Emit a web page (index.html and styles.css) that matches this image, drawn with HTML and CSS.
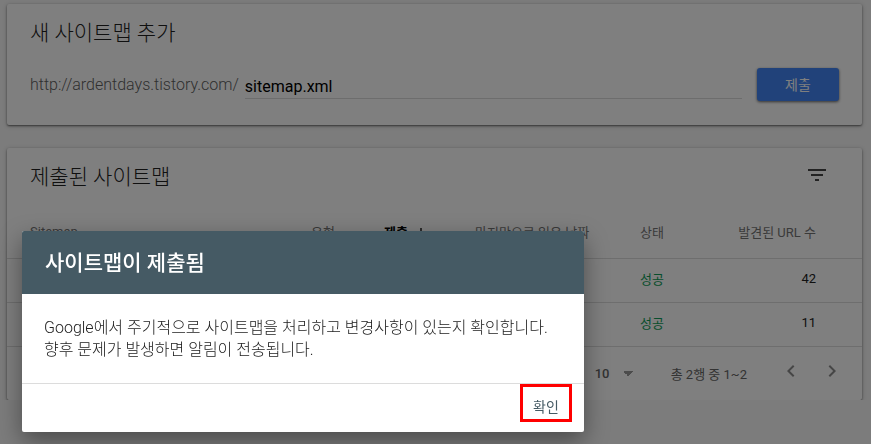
FILE: index.html
```html
<!DOCTYPE html>
<html lang="ko">

<head>
    <meta charset="UTF-8">
    <meta name="viewport" content="width=device-width, initial-scale=1.0">
    <title>Sitemaps</title>
    <link rel="stylesheet" href="styles.css">
</head>

<body>
    <main>
        <section class="card add-card">
            <h2>새 사이트맵 추가</h2>
            <form class="add-form">
                <label for="sitemap-url">http://ardentdays.tistory.com/</label>
                <input id="sitemap-url" type="text" value="sitemap.xml">
                <button type="button" class="submit-btn">제출</button>
            </form>
        </section>

        <section class="card">
            <div class="card-header">
                <h2>제출된 사이트맵</h2>
                <button type="button" class="icon-btn" aria-label="필터">
                    <svg width="24" height="24" viewBox="0 0 24 24" fill="#444"><path d="M10 18h4v-2h-4v2zM3 6v2h18V6H3zm3 7h12v-2H6v2z"/></svg>
                </button>
            </div>
            <table>
                <colgroup>
                    <col>
                    <col class="col-type">
                    <col class="col-sent">
                    <col class="col-read">
                    <col class="col-status">
                    <col class="col-count">
                </colgroup>
                <thead>
                    <tr>
                        <th>Sitemap</th>
                        <th>유형</th>
                        <th class="sorted">제출 <svg width="12" height="12" viewBox="0 0 12 12" fill="none" stroke="#222" stroke-width="1.5"><path d="M6 0v11M1 6l5 5 5-5"/></svg></th>
                        <th>마지막으로 읽은 날짜</th>
                        <th>상태</th>
                        <th class="count">발견된 URL 수</th>
                    </tr>
                </thead>
                <tbody>
                    <tr>
                        <td></td>
                        <td></td>
                        <td></td>
                        <td></td>
                        <td class="success">성공</td>
                        <td class="count">42</td>
                    </tr>
                    <tr>
                        <td></td>
                        <td></td>
                        <td></td>
                        <td></td>
                        <td class="success">성공</td>
                        <td class="count">11</td>
                    </tr>
                </tbody>
            </table>
            <div class="pager">
                <select aria-label="페이지당 행 수">
                    <option>10</option>
                    <option>25</option>
                </select>
                <span class="range">총 2행 중 1~2</span>
                <button type="button" class="icon-btn" aria-label="이전">
                    <svg width="24" height="24" viewBox="0 0 24 24" fill="#8c8c8c"><path d="M15.41 7.41L14 6l-6 6 6 6 1.41-1.41L10.83 12z"/></svg>
                </button>
                <button type="button" class="icon-btn" aria-label="다음">
                    <svg width="24" height="24" viewBox="0 0 24 24" fill="#8c8c8c"><path d="M10 6L8.59 7.41 13.17 12l-4.58 4.59L10 18l6-6z"/></svg>
                </button>
            </div>
        </section>
    </main>

    <div class="overlay"></div>
    <div class="dialog" role="dialog" aria-labelledby="dialog-title">
        <h1 id="dialog-title">사이트맵이 제출됨</h1>
        <p>Google에서 주기적으로 사이트맵을 처리하고 변경사항이 있는지 확인합니다.<br>향후 문제가 발생하면 알림이 전송됩니다.</p>
        <div class="dialog-actions">
            <button type="button" class="confirm-btn">확인</button>
        </div>
    </div>
</body>

</html>
```

FILE: styles.css
```css
* {
    box-sizing: border-box;
}

body {
    margin: 0;
    background: #f8f8f8;
    color: #212121;
    font-family: Roboto, "Noto Sans CJK KR", sans-serif;
    font-size: 13px;
    overflow: hidden;
}

button,
input,
select {
    font-family: inherit;
}

h1,
h2 {
    margin: 0;
    font-weight: 300;
    font-size: 21px;
    line-height: 28px;
}

main {
    display: flex;
    flex-direction: column;
    gap: 23px;
    padding: 4px 9px 0 7px;
}

.card {
    background: #fff;
    border-radius: 2px;
    box-shadow: 0 1px 2px rgba(0, 0, 0, 0.5), 0 1px 5px rgba(0, 0, 0, 0.2);
}

.add-card {
    padding: 15px 23px 24px;
}

.add-form {
    display: flex;
    align-items: center;
    margin-top: 21px;
}

.add-form label {
    color: #616161;
    font-size: 16px;
    font-weight: 300;
}

.add-form input {
    flex: 1;
    min-width: 0;
    height: 28px;
    margin: 0 15px 0 6px;
    padding: 6px 0 2px;
    border: none;
    border-bottom: 1px solid #dadada;
    background: none;
    color: #000;
    font-size: 16px;
}

.submit-btn {
    width: 82px;
    height: 33px;
    padding: 0 0 2px;
    border: none;
    border-radius: 3px;
    background: #4285f4;
    color: #fff;
    font-size: 14px;
    box-shadow: 0 1px 3px rgba(0, 0, 0, 0.6);
}

.card-header {
    display: flex;
    align-items: center;
    justify-content: space-between;
    height: 58px;
    padding: 0 33px 0 23px;
}

.icon-btn {
    display: flex;
    padding: 0;
    border: none;
    background: none;
}

.card-header .icon-btn {
    padding-bottom: 4px;
}

table {
    width: 100%;
    table-layout: fixed;
    border-collapse: collapse;
}

.col-type {
    width: 73px;
}

.col-sent {
    width: 91px;
}

.col-read {
    width: 165px;
}

.col-status {
    width: 77px;
}

.col-count {
    width: 168px;
}

th,
td {
    height: 44px;
    padding: 0 0 4px 23px;
    border-bottom: 1px solid #dcdcdc;
    text-align: left;
    white-space: nowrap;
}

th {
    height: 52px;
    padding-bottom: 0;
    color: #757575;
    font-size: 13px;
    font-weight: 400;
}

.sorted {
    color: #000;
    font-weight: 700;
}

.sorted svg {
    margin-left: 4px;
    vertical-align: middle;
}

.count {
    padding-right: 46px;
    text-align: right;
}

.success {
    color: #0f9d58;
}

.pager {
    display: flex;
    align-items: center;
    justify-content: flex-end;
    height: 53px;
    padding: 0 18px 0 23px;
    color: #666;
}

.pager select {
    width: 40px;
    height: 24px;
    padding: 0;
    border: none;
    appearance: none;
    /* dropdown arrow */
    background: linear-gradient(to bottom right, #999 50%, transparent 50%) 33px 10px / 5px 5px no-repeat,
        linear-gradient(to bottom left, #999 50%, transparent 50%) 28px 10px / 5px 5px no-repeat;
    color: #666;
    font-size: 13px;
    font-weight: 500;
    opacity: 1;
}

.range {
    margin: 0 32px 0 36px;
}

.pager .icon-btn {
    padding-bottom: 4px;
}

.pager .icon-btn + .icon-btn {
    margin-left: 17px;
}

.overlay {
    position: fixed;
    inset: 0;
    background: rgba(0, 0, 0, 0.5);
}

.dialog {
    position: fixed;
    left: 22px;
    bottom: 12px;
    width: 562px;
    max-width: calc(100% - 44px);
    border-radius: 2px;
    background: #fff;
    overflow: hidden;
    box-shadow: 0 9px 24px rgba(0, 0, 0, 0.4);
}

.dialog h1 {
    padding: 18px 23px 17px;
    background: #455a64;
    color: #fff;
    font-weight: 500;
    font-size: 21px;
}

.dialog p {
    margin: 0;
    padding: 23px 22px 22px;
    font-size: 16px;
    font-weight: 300;
    line-height: 22px;
    word-break: keep-all;
}

.dialog-actions {
    display: flex;
    justify-content: flex-end;
    height: 49px;
    padding-right: 12px;
    border-top: 1px solid #dcdcdc;
}

.confirm-btn {
    width: 52px;
    height: 38px;
    padding: 6px 0 0;
    border: 3px solid #f00;
    background: none;
    color: #455a64;
    font-size: 14px;
}
```
